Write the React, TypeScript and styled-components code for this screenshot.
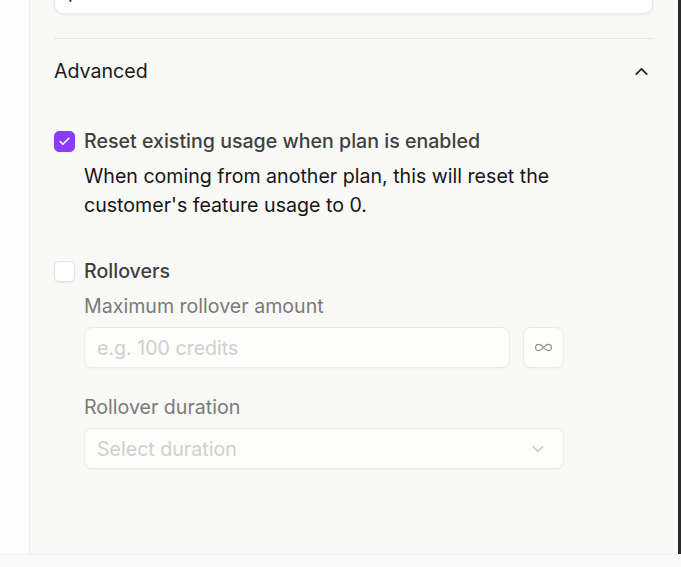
import React from "react";
import styled, { createGlobalStyle } from "styled-components";

const accent = "#8b3cf6";

const GlobalStyle = createGlobalStyle`
  html, body {
    margin: 0;
    padding: 0;
    height: 567px;
    overflow: hidden;
    background: #fafafa;
    font-family: Inter, "Noto Sans", "Liberation Sans", sans-serif;
    -webkit-font-smoothing: antialiased;
  }
  * { box-sizing: border-box; }
`;

const Page = styled.div`
  display: flex;
  flex-direction: column;
  height: 567px;
`;

const Body = styled.div`
  display: flex;
  height: 554px;
`;

const Sidebar = styled.aside`
  width: 30px;
  background: #fdfdfd;
  border-right: 1px solid #ececea;
`;

const Panel = styled.main`
  flex: 1;
  background: #f9f9f7;
  padding: 0 25px 0 24px;
  overflow: hidden;
`;

const ScrollBar = styled.div`
  width: 3px;
  background: #2a2a2a;
`;

const Footer = styled.div`
  height: 13px;
  background: #fafafa;
  border-top: 1px solid #f0f0ef;
`;

const TopInput = styled.div`
  margin-top: -27px;
  height: 41px;
  background: #ffffff;
  border: 1px solid #e6e6e4;
  border-radius: 9px;
  box-shadow: 0 1px 3px rgba(0, 0, 0, 0.05);
  padding: 0 13px;
  font-size: 19.6px;
  line-height: 34px;
  color: #222;
`;

const Divider = styled.hr`
  margin: 24px 0 0;
  border: none;
  border-top: 1px solid #e4e4e2;
`;

const AccordionHeader = styled.div`
  display: flex;
  align-items: center;
  justify-content: space-between;
  height: 62px;
  padding: 2px 1px 0 0;
  font-size: 19.6px;
  color: #1b1b1b;
`;

const AccordionBody = styled.div`
  padding-top: 30px;
`;

const CheckRow = styled.label`
  display: flex;
  align-items: center;
  gap: 9px;
`;

const Box = styled.span<{ $checked?: boolean }>`
  flex: none;
  width: 21px;
  height: 21px;
  border-radius: 5px;
  display: inline-flex;
  align-items: center;
  justify-content: center;
  background: ${(p) => (p.$checked ? accent : "#ffffff")};
  border: 1px solid ${(p) => (p.$checked ? accent : "#e2e2e0")};
  box-shadow: 0 1px 2px rgba(0, 0, 0, 0.05);
`;

const CheckLabel = styled.span`
  font-size: 19.6px;
  font-weight: 500;
  color: #3f3f3f;
  line-height: 21px;
`;

const Indent = styled.div`
  padding-left: 30px;
  max-width: 510px;
`;

const Description = styled.p`
  margin: 10px 0 0;
  font-size: 19.6px;
  line-height: 29px;
  color: #161616;
`;

const Group = styled.div<{ $gap?: number }>`
  margin-top: ${(p) => p.$gap ?? 0}px;
`;

const FieldLabel = styled.div<{ $top: number }>`
  margin-top: ${(p) => p.$top}px;
  font-size: 19.6px;
  line-height: 24px;
  color: #7a7a7a;
  margin-bottom: 9px;
`;

const InputRow = styled.div`
  display: flex;
  gap: 13px;
`;

const Field = styled.div`
  flex: 1;
  height: 41px;
  background: #fdfdfc;
  border: 1px solid #ebebe9;
  border-radius: 8px;
  box-shadow: 0 1px 2px rgba(0, 0, 0, 0.03);
  display: flex;
  align-items: center;
  justify-content: space-between;
  padding: 0 15px 0 12px;
  font-size: 19.6px;
  color: #cfcfcf;
`;

const IconButton = styled.div`
  flex: none;
  width: 41px;
  height: 41px;
  background: #fdfdfc;
  border: 1px solid #ebebe9;
  border-radius: 8px;
  box-shadow: 0 1px 2px rgba(0, 0, 0, 0.03);
  display: flex;
  align-items: center;
  justify-content: center;
`;

const Check = () => (
  <svg width="13" height="13" viewBox="0 0 24 24" fill="none" stroke="#fff" strokeWidth="3" strokeLinecap="round" strokeLinejoin="round">
    <path d="M20 6 9 17l-5-5" />
  </svg>
);

const ChevronUp = () => (
  <svg width="21" height="21" viewBox="0 0 24 24" fill="none" stroke="#262626" strokeWidth="2.1" strokeLinecap="round" strokeLinejoin="round">
    <path d="m18 15-6-6-6 6" />
  </svg>
);

const ChevronDown = () => (
  <svg width="20" height="20" viewBox="0 0 24 24" fill="none" stroke="#c9c9c9" strokeWidth="1.8" strokeLinecap="round" strokeLinejoin="round">
    <path d="m6 9 6 6 6-6" />
  </svg>
);

const InfinityIcon = () => (
  <svg width="19" height="19" viewBox="0 0 24 24" fill="none" stroke="#8f8f8f" strokeWidth="1.5" strokeLinecap="round" strokeLinejoin="round">
    <path d="M12 12c-2-2.67-4-4-6-4a4 4 0 1 0 0 8c2 0 4-1.33 6-4Zm0 0c2 2.67 4 4 6 4a4 4 0 0 0 0-8c-2 0-4 1.33-6 4Z" />
  </svg>
);

const App = () => {
  return (
    <Page>
      <GlobalStyle />
      <Body>
        <Sidebar />
        <Panel>
          <TopInput>p</TopInput>
          <Divider />
          <AccordionHeader>
            <span>Advanced</span>
            <ChevronUp />
          </AccordionHeader>
          <AccordionBody>
            <CheckRow>
              <Box $checked>
                <Check />
              </Box>
              <CheckLabel>Reset existing usage when plan is enabled</CheckLabel>
            </CheckRow>
            <Indent>
              <Description>
                When coming from another plan, this will reset the customer's feature usage to 0.
              </Description>
            </Indent>

            <Group $gap={41}>
              <CheckRow>
                <Box />
                <CheckLabel>Rollovers</CheckLabel>
              </CheckRow>
              <Indent>
                <FieldLabel $top={12}>Maximum rollover amount</FieldLabel>
                <InputRow>
                  <Field>e.g. 100 credits</Field>
                  <IconButton>
                    <InfinityIcon />
                  </IconButton>
                </InputRow>
                <FieldLabel $top={27}>Rollover duration</FieldLabel>
                <Field>
                  <span>Select duration</span>
                  <ChevronDown />
                </Field>
              </Indent>
            </Group>
          </AccordionBody>
        </Panel>
        <ScrollBar />
      </Body>
      <Footer />
    </Page>
  );
};

export default App;
